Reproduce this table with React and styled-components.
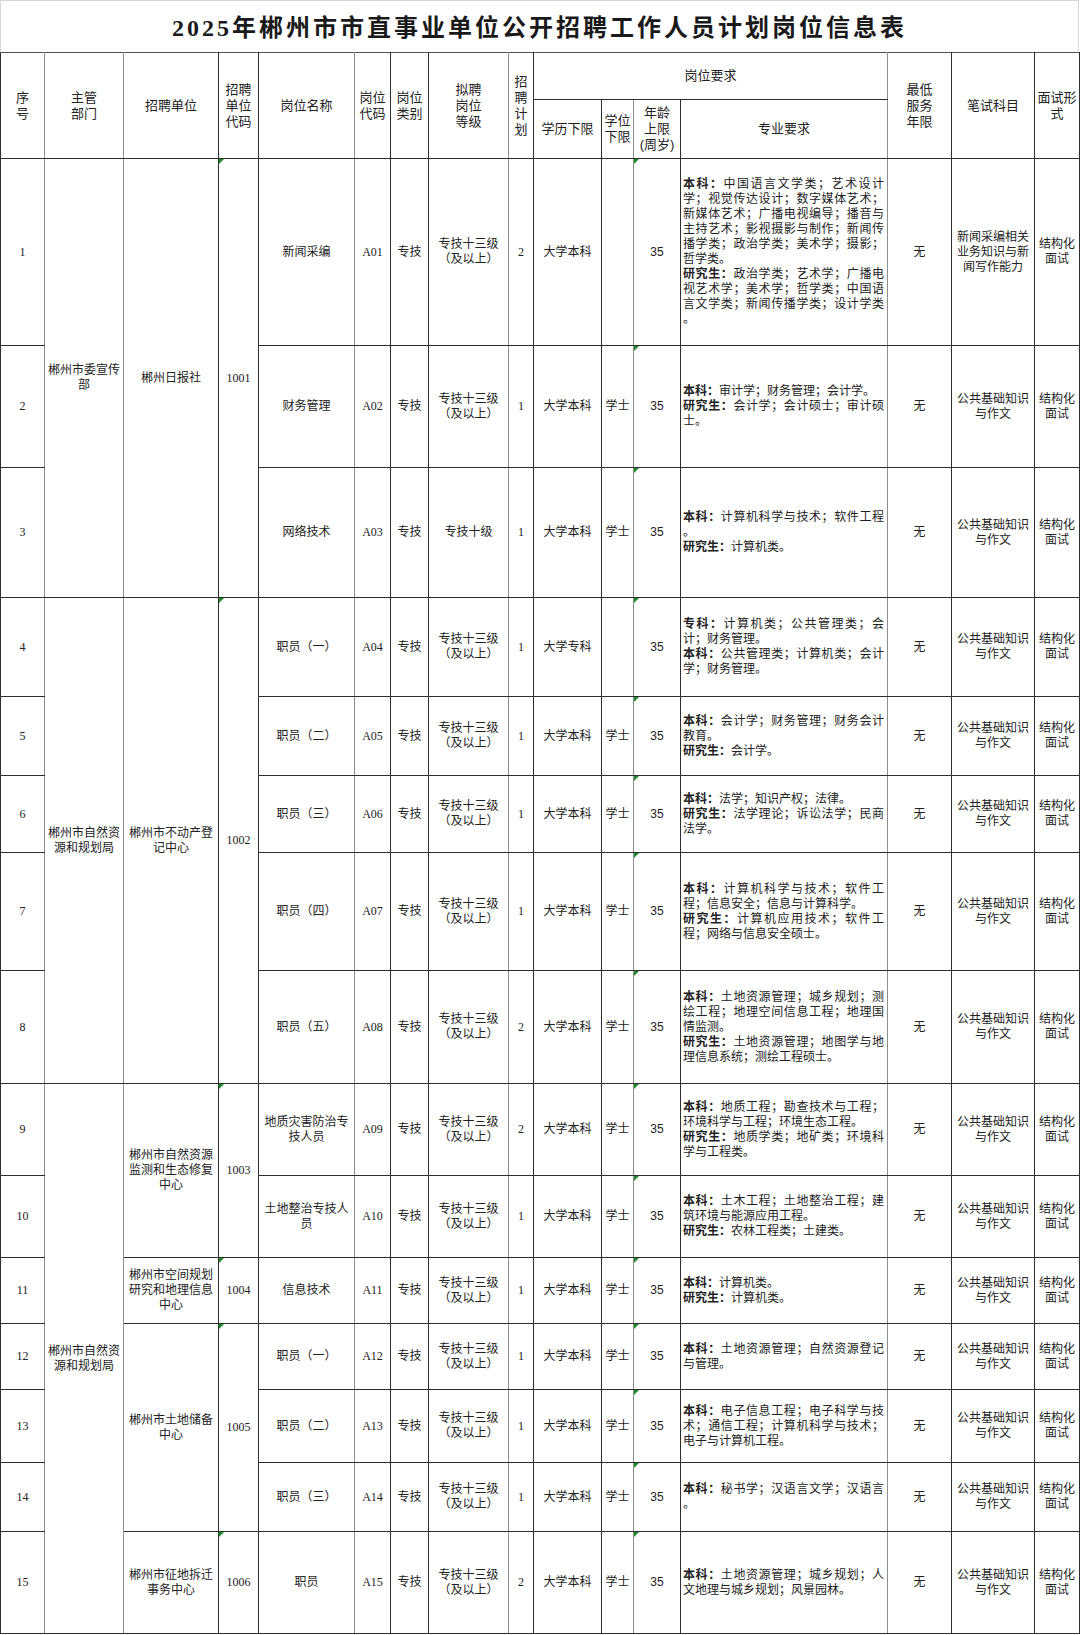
import styled, { createGlobalStyle, css } from "styled-components";

const GlobalStyle = createGlobalStyle`
  html, body {
    margin: 0;
    background: #ffffff;
  }
`;

const COLS = [44, 79, 95, 40, 96, 36, 38, 80, 25, 68, 32, 47, 207, 64, 83, 45];
// columns whose right rule is the lighter grey one
const SOFT = [0, 1, 4, 7, 10, 12];

const Sheet = styled.div`
  width: 1079px;
  font-family: "Liberation Sans", "Noto Sans CJK SC", sans-serif;
  color: #222;
`;

const Title = styled.h1`
  margin: 0;
  box-sizing: border-box;
  height: 52px;
  padding-top: 5px;
  border: 1px solid #d6d6d6;
  border-bottom: none;
  font-family: "Liberation Serif", "Noto Sans CJK SC", serif;
  font-size: 24px;
  font-weight: 700;
  letter-spacing: 3px;
  line-height: 44px;
  text-align: center;
  color: #1a1a1a;
`;

const Grid = styled.table`
  width: 1079px;
  table-layout: fixed;
  border-collapse: collapse;
  border-top: 1px solid #555;
  border-left: 1px solid #2e2e2e;
`;

const cellRules = css`
  border: none;
  border-right: 1px solid ${(p) => (p.$soft ? "#8e8e8e" : "#2e2e2e")};
  border-bottom: 1px solid #2e2e2e;
  padding: 0 2px;
  text-align: center;
  vertical-align: middle;
  position: relative;
  overflow: hidden;
`;

const HeadCell = styled.th`
  ${cellRules}
  font-weight: 400;
  font-size: 13px;
  line-height: 16px;
`;

const Cell = styled.td`
  ${cellRules}
  font-size: 12px;
  line-height: 15px;
  font-family: ${(p) =>
    p.$serif
      ? `"Liberation Serif", "Noto Sans CJK SC", serif`
      : `"Liberation Sans", "Noto Sans CJK SC", sans-serif`};
  ${(p) =>
    p.$flag &&
    css`
      &::before {
        content: "";
        position: absolute;
        top: 0;
        left: 0;
        border-top: 5px solid #1f8a2a;
        border-right: 5px solid transparent;
      }
    `}
`;

const MajorCell = styled(Cell)`
  text-align: left;
  padding: 0 3px 0 2px;
`;

const Line = styled.span`
  display: block;
  text-align: ${(p) => (p.$fill ? "justify" : "left")};
  text-align-last: ${(p) => (p.$fill ? "justify" : "left")};
  white-space: nowrap;
`;

const Label = styled.b`
  font-weight: 700;
`;

const Row = styled.tr`
  height: ${(p) => p.$h}px;
`;

const A = "郴州市自然资源和规划局";
const GRADE = "专技十三级|（及以上）";
const EXAM = "公共基础知识与作文";

const rows = [
  {
    h: 187, dept: "郴州市委宣传部", deptSpan: 3, unit: "郴州日报社", unitSpan: 3, code: "1001",
    post: "新闻采编", pcode: "A01", grade: GRADE, plan: 2, edu: "大学本科", degree: "",
    exam: "新闻采编相关业务知识与新闻写作能力",
    major: [
      ["本科：中国语言文学类；艺术设计", "学；视觉传达设计；数字媒体艺术；", "新媒体艺术；广播电视编导；播音与", "主持艺术；影视摄影与制作；新闻传", "播学类；政治学类；美术学；摄影；", "哲学类。"],
      ["研究生：政治学类；艺术学；广播电", "视艺术学；美术学；哲学类；中国语", "言文学类；新闻传播学类；设计学类", "。"],
    ],
  },
  {
    h: 122, post: "财务管理", pcode: "A02", grade: GRADE, plan: 1, edu: "大学本科", degree: "学士",
    major: [["本科：审计学；财务管理；会计学。"], ["研究生：会计学；会计硕士；审计硕", "士。"]],
  },
  {
    h: 130, post: "网络技术", pcode: "A03", grade: "专技十级", plan: 1, edu: "大学本科", degree: "学士",
    major: [["本科：计算机科学与技术；软件工程", "。"], ["研究生：计算机类。"]],
  },
  {
    h: 99, dept: A, deptSpan: 5, unit: "郴州市不动产登记中心", unitSpan: 5, code: "1002",
    post: "职员（一）", pcode: "A04", grade: GRADE, plan: 1, edu: "大学专科", degree: "",
    major: [["专科：计算机类；公共管理类；会", "计；财务管理。"], ["本科：公共管理类；计算机类；会计", "学；财务管理。"]],
  },
  {
    h: 79, post: "职员（二）", pcode: "A05", grade: GRADE, plan: 1, edu: "大学本科", degree: "学士",
    major: [["本科：会计学；财务管理；财务会计", "教育。"], ["研究生：会计学。"]],
  },
  {
    h: 77, post: "职员（三）", pcode: "A06", grade: GRADE, plan: 1, edu: "大学本科", degree: "学士",
    major: [["本科：法学；知识产权；法律。"], ["研究生：法学理论；诉讼法学；民商", "法学。"]],
  },
  {
    h: 118, post: "职员（四）", pcode: "A07", grade: GRADE, plan: 1, edu: "大学本科", degree: "学士",
    major: [["本科：计算机科学与技术；软件工", "程；信息安全；信息与计算科学。"], ["研究生：计算机应用技术；软件工", "程；网络与信息安全硕士。"]],
  },
  {
    h: 113, post: "职员（五）", pcode: "A08", grade: GRADE, plan: 2, edu: "大学本科", degree: "学士",
    major: [["本科：土地资源管理；城乡规划；测", "绘工程；地理空间信息工程；地理国", "情监测。"], ["研究生：土地资源管理；地图学与地", "理信息系统；测绘工程硕士。"]],
  },
  {
    h: 92, dept: A, deptSpan: 7, unit: "郴州市自然资源监测和生态修复中心", unitSpan: 2, code: "1003",
    post: "地质灾害防治专技人员", pcode: "A09", grade: GRADE, plan: 2, edu: "大学本科", degree: "学士",
    major: [["本科：地质工程；勘查技术与工程；", "环境科学与工程；环境生态工程。"], ["研究生：地质学类；地矿类；环境科", "学与工程类。"]],
  },
  {
    h: 82, post: "土地整治专技人员", pcode: "A10", grade: GRADE, plan: 1, edu: "大学本科", degree: "学士",
    major: [["本科：土木工程；土地整治工程；建", "筑环境与能源应用工程。"], ["研究生：农林工程类；土建类。"]],
  },
  {
    h: 66, unit: "郴州市空间规划研究和地理信息中心", unitSpan: 1, code: "1004",
    post: "信息技术", pcode: "A11", grade: GRADE, plan: 1, edu: "大学本科", degree: "学士",
    major: [["本科：计算机类。"], ["研究生：计算机类。"]],
  },
  {
    h: 66, unit: "郴州市土地储备中心", unitSpan: 3, code: "1005",
    post: "职员（一）", pcode: "A12", grade: GRADE, plan: 1, edu: "大学本科", degree: "学士",
    major: [["本科：土地资源管理；自然资源登记", "与管理。"]],
  },
  {
    h: 73, post: "职员（二）", pcode: "A13", grade: GRADE, plan: 1, edu: "大学本科", degree: "学士",
    major: [["本科：电子信息工程；电子科学与技", "术；通信工程；计算机科学与技术；", "电子与计算机工程。"]],
  },
  {
    h: 69, post: "职员（三）", pcode: "A14", grade: GRADE, plan: 1, edu: "大学本科", degree: "学士",
    major: [["本科：秘书学；汉语言文学；汉语言", "。"]],
  },
  {
    h: 102, unit: "郴州市征地拆迁事务中心", unitSpan: 1, code: "1006",
    post: "职员", pcode: "A15", grade: GRADE, plan: 2, edu: "大学本科", degree: "学士",
    major: [["本科：土地资源管理；城乡规划；人", "文地理与城乡规划；风景园林。"]],
  },
];

const LABELS = ["本科：", "专科：", "研究生："];

const MajorLine = ({ text, fill }) => {
  const label = LABELS.find((l) => text.startsWith(l));
  return (
    <Line $fill={fill}>
      {label && <Label>{label}</Label>}
      {label ? text.slice(label.length) : text}
    </Line>
  );
};

const Stacked = ({ text }) =>
  text.split("|").map((part, i) => (
    <span key={i}>
      {i > 0 && <br />}
      {part}
    </span>
  ));

const Header = () => (
  <thead>
    <tr style={{ height: 47 }}>
      <HeadCell rowSpan={2} $soft>序<br />号</HeadCell>
      <HeadCell rowSpan={2} $soft>主管<br />部门</HeadCell>
      <HeadCell rowSpan={2}>招聘单位</HeadCell>
      <HeadCell rowSpan={2}>招聘<br />单位<br />代码</HeadCell>
      <HeadCell rowSpan={2} $soft>岗位名称</HeadCell>
      <HeadCell rowSpan={2}>岗位<br />代码</HeadCell>
      <HeadCell rowSpan={2}>岗位<br />类别</HeadCell>
      <HeadCell rowSpan={2} $soft>拟聘<br />岗位<br />等级</HeadCell>
      <HeadCell rowSpan={2}>招<br />聘<br />计<br />划</HeadCell>
      <HeadCell colSpan={4} $soft>岗位要求</HeadCell>
      <HeadCell rowSpan={2}>最低<br />服务<br />年限</HeadCell>
      <HeadCell rowSpan={2}>笔试科目</HeadCell>
      <HeadCell rowSpan={2}>面试形<br />式</HeadCell>
    </tr>
    <tr style={{ height: 59 }}>
      <HeadCell>学历下限</HeadCell>
      <HeadCell $soft>学位<br />下限</HeadCell>
      <HeadCell>年龄<br />上限<br />(周岁)</HeadCell>
      <HeadCell $soft>专业要求</HeadCell>
    </tr>
  </thead>
);

export default function App() {
  return (
    <Sheet>
      <GlobalStyle />
      <Title>2025年郴州市市直事业单位公开招聘工作人员计划岗位信息表</Title>
      <Grid>
        <colgroup>
          {COLS.map((w, i) => (
            <col key={i} style={{ width: w }} />
          ))}
        </colgroup>
        <Header />
        <tbody>
          {rows.map((r, i) => (
            <Row key={r.pcode} $h={r.h}>
              <Cell $soft $serif>{i + 1}</Cell>
              {r.dept && <Cell rowSpan={r.deptSpan} $soft>{r.dept}</Cell>}
              {r.unit && <Cell rowSpan={r.unitSpan}>{r.unit}</Cell>}
              {r.code && <Cell rowSpan={r.unitSpan} $serif $flag>{r.code}</Cell>}
              <Cell $soft>{r.post}</Cell>
              <Cell $serif>{r.pcode}</Cell>
              <Cell>专技</Cell>
              <Cell $soft><Stacked text={r.grade} /></Cell>
              <Cell $serif>{r.plan}</Cell>
              <Cell>{r.edu}</Cell>
              <Cell $soft>{r.degree}</Cell>
              <Cell $flag>35</Cell>
              <MajorCell $soft>
                {r.major.map((para) =>
                  para.map((line, j) => (
                    <MajorLine key={line + j} text={line} fill={j < para.length - 1} />
                  ))
                )}
              </MajorCell>
              <Cell>无</Cell>
              <Cell>{r.exam || EXAM}</Cell>
              <Cell>结构化面试</Cell>
            </Row>
          ))}
        </tbody>
      </Grid>
    </Sheet>
  );
}
